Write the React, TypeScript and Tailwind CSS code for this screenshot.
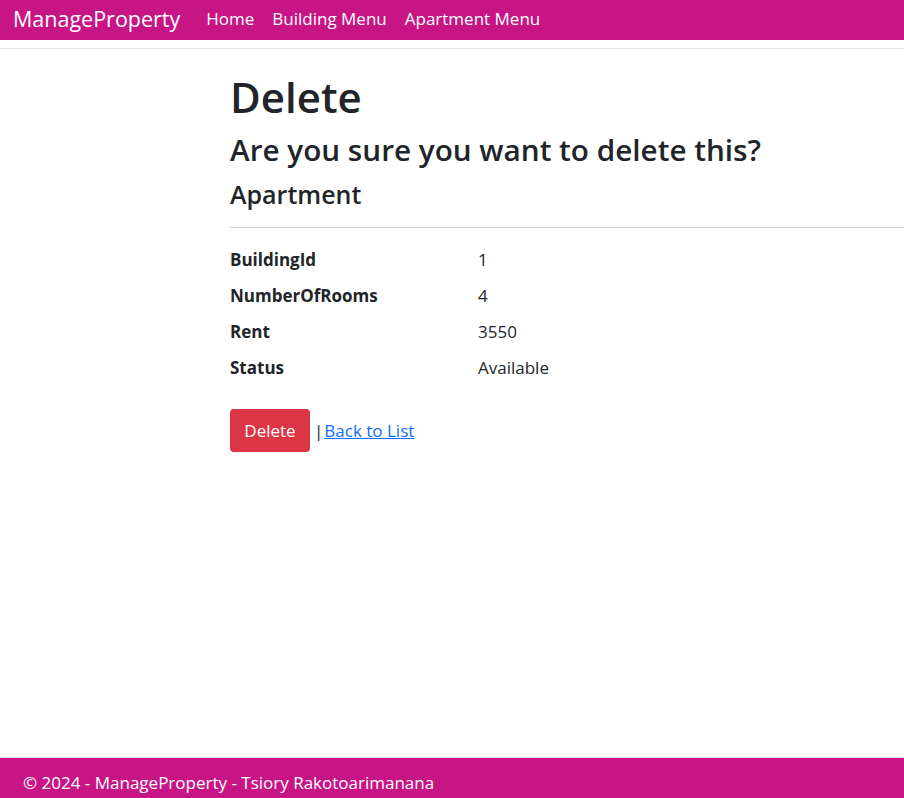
export default function App() {
  const rows: [string, string][] = [
    ["BuildingId", "1"],
    ["NumberOfRooms", "4"],
    ["Rent", "3550"],
    ["Status", "Available"],
  ];
  return (
    <div
      className="relative flex min-h-[798px] flex-col bg-white text-[#212529]"
      style={{ fontFamily: '"Open Sans", "Noto Sans", sans-serif' }}
    >
      <header className="border-b border-[#e5e5e5] pb-2">
        <nav className="flex h-10 items-center bg-[#c71585] pb-[3px] pl-[13px] text-white">
          <span className="text-[21.5px] leading-none">ManageProperty</span>
          <div className="ml-[26px] flex gap-[18px] text-[17px] leading-none">
            <span>Home</span>
            <span>Building Menu</span>
            <span>Apartment Menu</span>
          </div>
        </nav>
      </header>
      <main className="flex-1 pl-[230px] pt-[24px]">
        <h1 className="text-[42px] leading-[48px] font-semibold">Delete</h1>
        <h3 className="mt-[11px] text-[29.7px] leading-[36px] font-semibold">Are you sure you want to delete this?</h3>
        <h4 className="mt-[10px] text-[25px] leading-[32px] font-semibold">Apartment</h4>
        <hr className="mt-[17px] border-t border-[#cccccc]" />
        <dl className="mt-[20px] grid grid-cols-[248px_1fr] gap-y-[12px] text-[17px] leading-[24px]">
          {rows.map(([k, v]) => (
            <div key={k} className="contents">
              <dt className="font-bold">{k}</dt>
              <dd>{v}</dd>
            </div>
          ))}
        </dl>
        <div className="mt-[29px] flex items-center text-[17px]">
          <button className="h-[43px] w-[80px] rounded-[4px] bg-[#dc3545] text-white">Delete</button>
          <span className="ml-[4px]">|</span>
          <a href="#" className="ml-[1px] text-[#0d6efd] underline">Back to List</a>
        </div>
      </main>
      <footer className="flex h-[41px] items-center border-t border-[#dee2e6] bg-[#c71585] pl-[23px] pt-[10px] text-[17px] text-white">
        © 2024 - ManageProperty - Tsiory Rakotoarimanana
      </footer>
    </div>
  );
}
